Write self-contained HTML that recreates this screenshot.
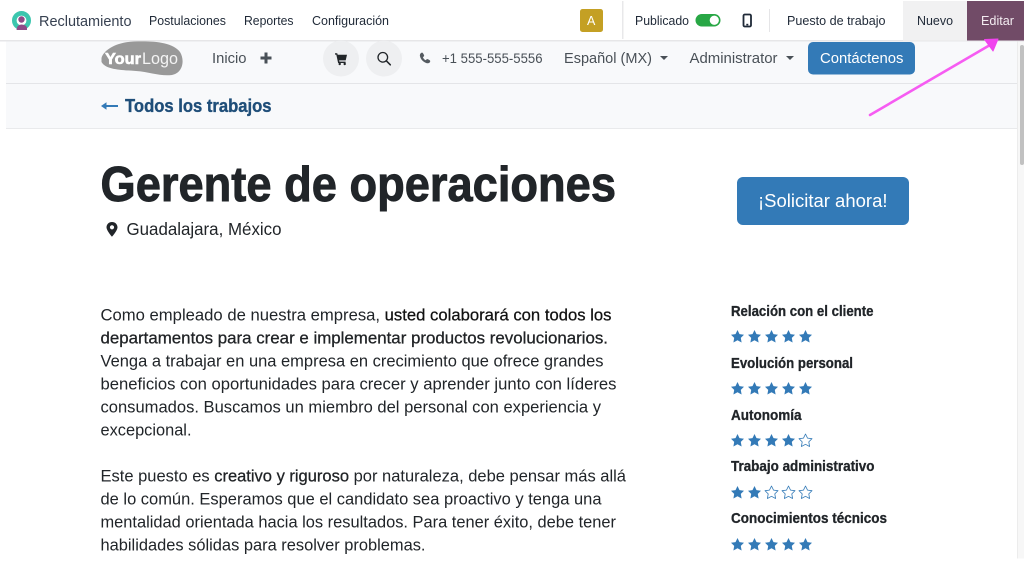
<!DOCTYPE html>
<html lang="es"><head><meta charset="utf-8"><title>Reclutamiento</title>
<style>
html,body{margin:0;padding:0;background:#fff;width:1024px;height:568px;overflow:hidden}
svg{display:block;position:absolute;left:0;top:0}
text{font-family:"Liberation Sans",sans-serif;fill:#212529}
.b{font-size:12.8px;fill:#1f2937}
.n{font-size:15px;fill:#495057}
.p{font-size:16.5px;fill:#212529}
.sk{font-size:14.3px;font-weight:700;fill:#212529;stroke:#212529;stroke-width:.3}
</style></head><body>
<svg width="1024" height="568" viewBox="0 0 1024 568" xmlns="http://www.w3.org/2000/svg">
<defs>
<path id="s" d="M6.5 0 L8.5 4.1 L13 4.7 L9.8 7.9 L10.6 12.5 L6.5 10.3 L2.4 12.5 L3.2 7.9 L0 4.7 L4.500 4.100Z" stroke-linejoin="round"/>
</defs>
<rect width="1024" height="568" fill="#fff"/>
<!-- website header -->
<rect x="6" y="41" width="1011" height="88" fill="#f8f9fb"/>
<rect x="6" y="83" width="1011" height="1" fill="#e4e5e8"/>
<rect x="6" y="128" width="1011" height="1" fill="#e9eaec"/>
<!-- top bar -->
<rect x="0" y="0" width="1024" height="40" fill="#fff"/>
<rect x="0" y="40" width="1024" height="1.5" fill="#e6e6e8"/>
<!-- app logo -->
<circle cx="21.500" cy="20.500" r="7.200" fill="none" stroke="#3cc6ae" stroke-width="4.600"/>
<circle cx="21.500" cy="19.500" r="3.200" fill="#8e4a87"/>
<path d="M16.500 30 Q17 24.500 21.500 24.500 Q25.500 24.500 27 27.500 L27 30Z" fill="#8e4a87"/>
<text x="39" y="26" textLength="92.500" lengthAdjust="spacingAndGlyphs" style="font-size:14.800px;fill:#374151">Reclutamiento</text>
<text class="b" x="149" y="25" textLength="77" lengthAdjust="spacingAndGlyphs">Postulaciones</text>
<text class="b" x="244" y="25" textLength="49.500" lengthAdjust="spacingAndGlyphs">Reportes</text>
<text class="b" x="312" y="25" textLength="77" lengthAdjust="spacingAndGlyphs">Configuración</text>
<rect x="580" y="9" width="23" height="23" rx="2.500" fill="#c4a024"/>
<text x="587" y="25" style="font-size:12.500px;fill:#fff">A</text>
<rect x="622" y="1" width="1.500" height="38" fill="#e8e8ea"/>
<text class="b" x="635" y="25" textLength="54" lengthAdjust="spacingAndGlyphs">Publicado</text>
<rect x="695.500" y="14" width="25" height="12.500" rx="6.250" fill="#28a745"/>
<circle cx="714.300" cy="20.250" r="4.600" fill="#fff"/>
<rect x="743.500" y="14.500" width="7.500" height="12" rx="1.300" fill="none" stroke="#1f2937" stroke-width="1.800"/>
<rect x="746.300" y="23.800" width="2" height="1.600" fill="#1f2937"/>
<rect x="769" y="9" width="1" height="23" fill="#e5e5e7"/>
<text class="b" x="787" y="25" textLength="98.500" lengthAdjust="spacingAndGlyphs">Puesto de trabajo</text>
<rect x="903" y="1" width="64" height="39.500" fill="#f1f1f2"/>
<text class="b" x="917" y="25" textLength="36" lengthAdjust="spacingAndGlyphs">Nuevo</text>
<rect x="967" y="1" width="57" height="39.500" fill="#714b67"/>
<text x="981" y="25" textLength="33" lengthAdjust="spacingAndGlyphs" style="font-size:12.800px;fill:#f3ecf1">Editar</text>
<!-- logo -->
<path d="M101.500 58 C104 49 118 42 134 41.500 C152 41 172 41.500 180 52 C185 60 183 73 172 75 C160 76.500 150 72 136 71 C122 70 106 70 101.500 62Z" fill="#999"/>
<text x="105" y="64" textLength="36" lengthAdjust="spacingAndGlyphs" style="font-size:16px;font-weight:700;fill:#fff;stroke:#fff;stroke-width:.6">Your</text>
<text x="142" y="64" textLength="36" lengthAdjust="spacingAndGlyphs" style="font-size:16.500px;fill:#f4f4f4">Logo</text>
<text class="n" x="212" y="63" textLength="34.500" lengthAdjust="spacingAndGlyphs">Inicio</text>
<path d="M264.500 52.500h3v4h4v3h-4v4h-3v-4h-4v-3h4z" fill="#495057"/>
<circle cx="341" cy="58.500" r="18" fill="#eeeff1"/>
<circle cx="384" cy="58.500" r="18" fill="#eeeff1"/>
<path d="M335 53.300h2.200l.5 1.500h9.300l-1.300 5.600h-6.600l.3 1.200h6.200v1.400h-7.500l-1.800-8.400h-1.300z" fill="#212529"/>
<circle cx="339.700" cy="64" r="1.200" fill="#212529"/><circle cx="344.700" cy="64" r="1.200" fill="#212529"/>
<circle cx="382.800" cy="57.300" r="4.800" fill="none" stroke="#212529" stroke-width="1.300"/>
<path d="M386.300 60.800l4 4" stroke="#212529" stroke-width="1.500" stroke-linecap="round"/>
<path d="M421 53c.7-.5 1.600-.5 2 .2l1 1.800c.3.600.1 1.200-.4 1.600l-.7.600c.5 1.300 1.500 2.400 2.800 3l.7-.7c.4-.4 1.100-.5 1.600-.2l1.700 1c.6.400.7 1.300.2 1.900-.8.900-1.900 1.300-3 1-3.500-1-6.300-3.800-7-7.300-.2-1.100.3-2.200 1.100-2.900z" fill="#555b61"/>
<text x="442" y="63" textLength="100.500" lengthAdjust="spacingAndGlyphs" style="font-size:13.800px;fill:#495057">+1 555-555-5556</text>
<text class="n" x="564" y="63" textLength="88" lengthAdjust="spacingAndGlyphs">Español (MX)</text>
<path d="M660 56h8l-4 4z" fill="#495057"/>
<text class="n" x="689.500" y="63" textLength="88" lengthAdjust="spacingAndGlyphs">Administrator</text>
<path d="M786 56h8l-4 4z" fill="#495057"/>
<rect x="808" y="42" width="107" height="32.500" rx="5" fill="#337ab7"/>
<text x="820" y="63" textLength="83.500" lengthAdjust="spacingAndGlyphs" style="font-size:15px;fill:#fff">Contáctenos</text>
<!-- back link -->
<path d="M104 106h14" stroke="#337ab7" stroke-width="2"/>
<path d="M101 106l5.500-3.800v7.600z" fill="#337ab7"/>
<text x="125" y="112" textLength="146.500" lengthAdjust="spacingAndGlyphs" style="font-size:18px;font-weight:700;fill:#1f4e79;stroke:#1f4e79;stroke-width:.35">Todos los trabajos</text>
<!-- title -->
<text x="100.500" y="201" textLength="515.500" lengthAdjust="spacingAndGlyphs" style="font-size:49px;font-weight:700;fill:#212529;stroke:#212529;stroke-width:.9">Gerente de operaciones</text>
<path d="M112 222c-3.200 0-5.500 2.400-5.500 5.300 0 3.400 5.500 9.500 5.500 9.500s5.500-6.100 5.500-9.500c0-2.900-2.300-5.300-5.500-5.300zm0 7.400a2.100 2.100 0 1 1 0-4.200 2.100 2.100 0 0 1 0 4.200z" fill="#212529"/>
<text x="126.500" y="235" textLength="155" lengthAdjust="spacingAndGlyphs" style="font-size:17.500px;fill:#212529">Guadalajara, México</text>
<rect x="737" y="177" width="172" height="48" rx="6" fill="#337ab7"/>
<text x="758" y="207" textLength="129.500" lengthAdjust="spacingAndGlyphs" style="font-size:18.500px;fill:#fff">¡Solicitar ahora!</text>
<!-- body text -->
<text class="p" x="100.500" y="320.600" textLength="511" lengthAdjust="spacingAndGlyphs">Como empleado de nuestra empresa, <tspan style="fill:#111;stroke:#111;stroke-width:.25">usted colaborará con todos los</tspan></text>
<text class="p" x="100.500" y="343.600" textLength="507.500" lengthAdjust="spacingAndGlyphs" style="stroke:#111;stroke-width:.25">departamentos para crear e implementar productos revolucionarios.</text>
<text class="p" x="100.500" y="366.600" textLength="503" lengthAdjust="spacingAndGlyphs">Venga a trabajar en una empresa en crecimiento que ofrece grandes</text>
<text class="p" x="100.500" y="389.600" textLength="516" lengthAdjust="spacingAndGlyphs">beneficios con oportunidades para crecer y aprender junto con líderes</text>
<text class="p" x="100.500" y="412.600" textLength="500.500" lengthAdjust="spacingAndGlyphs">consumados. Buscamos un miembro del personal con experiencia y</text>
<text class="p" x="100.500" y="435.600" textLength="91" lengthAdjust="spacingAndGlyphs">excepcional.</text>
<text class="p" x="100.500" y="481.600" textLength="525.500" lengthAdjust="spacingAndGlyphs">Este puesto es <tspan style="stroke:#111;stroke-width:.25">creativo y riguroso</tspan> por naturaleza, debe pensar más allá</text>
<text class="p" x="100.500" y="504.600" textLength="501" lengthAdjust="spacingAndGlyphs">de lo común. Esperamos que el candidato sea proactivo y tenga una</text>
<text class="p" x="100.500" y="527.600" textLength="515.500" lengthAdjust="spacingAndGlyphs">mentalidad orientada hacia los resultados. Para tener éxito, debe tener</text>
<text class="p" x="100.500" y="550.600" textLength="325" lengthAdjust="spacingAndGlyphs">habilidades sólidas para resolver problemas.</text>
<!-- skills -->
<text class="sk" x="731" y="316" textLength="142.500" lengthAdjust="spacingAndGlyphs">Relación con el cliente</text>
<g fill="#337ab7">
<use href="#s" x="731" y="330"/><use href="#s" x="748" y="330"/><use href="#s" x="765" y="330"/><use href="#s" x="782" y="330"/><use href="#s" x="799" y="330"/>
</g>
<text class="sk" x="731" y="368" textLength="122" lengthAdjust="spacingAndGlyphs">Evolución personal</text>
<g fill="#337ab7">
<use href="#s" x="731" y="382"/><use href="#s" x="748" y="382"/><use href="#s" x="765" y="382"/><use href="#s" x="782" y="382"/><use href="#s" x="799" y="382"/>
</g>
<text class="sk" x="731" y="420" textLength="70.500" lengthAdjust="spacingAndGlyphs">Autonomía</text>
<g fill="#337ab7">
<use href="#s" x="731" y="434"/><use href="#s" x="748" y="434"/><use href="#s" x="765" y="434"/><use href="#s" x="782" y="434"/>
</g>
<use href="#s" x="799" y="434" fill="#fff" stroke="#337ab7" stroke-width=".8"/>
<text class="sk" x="731" y="471" textLength="143.500" lengthAdjust="spacingAndGlyphs">Trabajo administrativo</text>
<g fill="#337ab7">
<use href="#s" x="731" y="486"/><use href="#s" x="748" y="486"/>
</g>
<g fill="#fff" stroke="#337ab7" stroke-width=".8">
<use href="#s" x="765" y="486"/><use href="#s" x="782" y="486"/><use href="#s" x="799" y="486"/>
</g>
<text class="sk" x="731" y="523" textLength="156" lengthAdjust="spacingAndGlyphs">Conocimientos técnicos</text>
<g fill="#337ab7">
<use href="#s" x="731" y="538"/><use href="#s" x="748" y="538"/><use href="#s" x="765" y="538"/><use href="#s" x="782" y="538"/><use href="#s" x="799" y="538"/>
</g>
<!-- scrollbar -->
<rect x="1017" y="41.500" width="7" height="517" fill="#f7f7f7"/>
<rect x="1017" y="41.500" width="1" height="517" fill="#ececec"/>
<rect x="1020" y="45" width="4" height="120" rx="2" fill="#c1c1c1"/>
<!-- arrow annotation -->
<path d="M870 115L990 45" stroke="#f65cf2" stroke-width="2.600" stroke-linecap="round"/>
<path d="M984.500 39.500L998 39L993 51Z" fill="#f043ee" stroke="#f043ee" stroke-width="1" stroke-linejoin="round"/>
</svg>
</body></html>
